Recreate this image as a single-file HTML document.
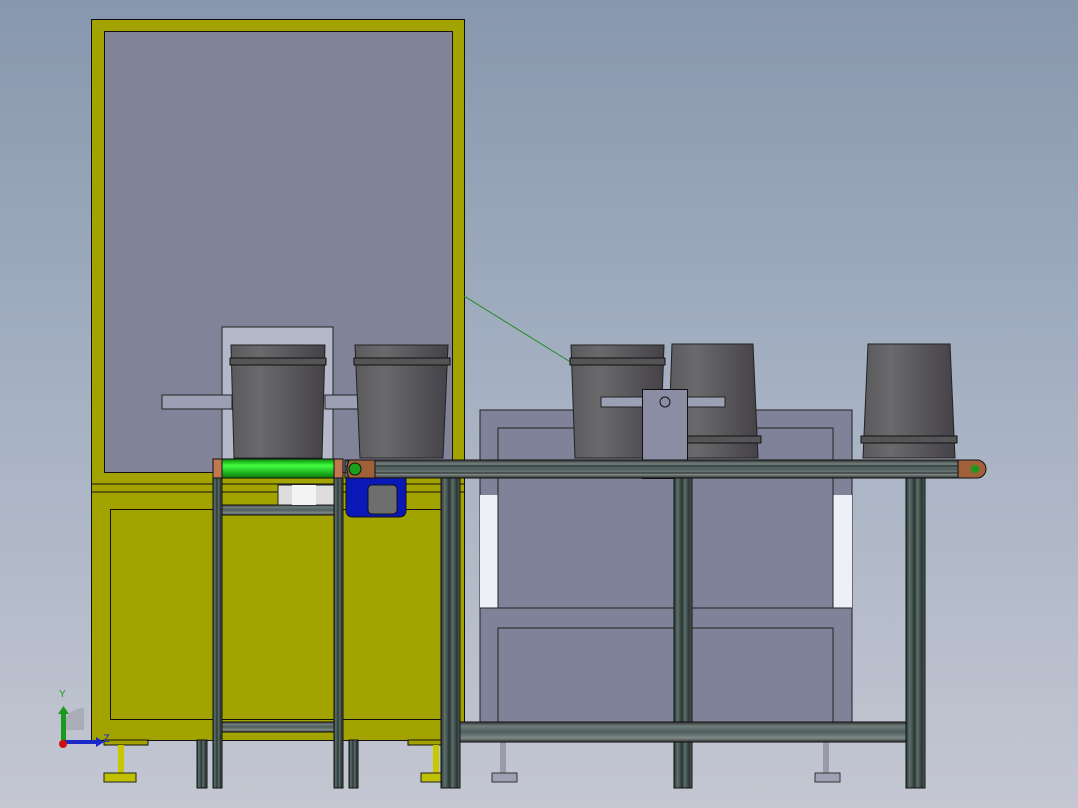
<!DOCTYPE html>
<html><head><meta charset="utf-8"><style>
html,body{margin:0;padding:0;width:1078px;height:808px;overflow:hidden}
body{background:linear-gradient(180deg,#8797ad 0%,#a3afc1 45%,#c4c7d2 100%)}
svg{position:absolute;left:0;top:0}
</style></head><body>
<svg width="1078" height="808" viewBox="0 0 1078 808" xmlns="http://www.w3.org/2000/svg" font-family="Liberation Sans, sans-serif">
<defs>
<linearGradient id="bk" x1="0" x2="1"><stop offset="0" stop-color="#5a5a5e"/><stop offset="0.3" stop-color="#6a6a6c"/><stop offset="1" stop-color="#454248"/></linearGradient>
<linearGradient id="gr" x1="0" y1="0" x2="0" y2="1"><stop offset="0" stop-color="#0a8a0a"/><stop offset="0.35" stop-color="#40ff40"/><stop offset="1" stop-color="#0a7a0a"/></linearGradient>
<linearGradient id="rail" x1="0" y1="0" x2="0" y2="1"><stop offset="0" stop-color="#333"/><stop offset="0.2" stop-color="#6f7d7b"/><stop offset="0.5" stop-color="#4f5e5c"/><stop offset="0.8" stop-color="#7f8b89"/><stop offset="1" stop-color="#333"/></linearGradient>
<linearGradient id="leg" x1="0" x2="1"><stop offset="0" stop-color="#2a3432"/><stop offset="0.2" stop-color="#5d706d"/><stop offset="0.45" stop-color="#2a3432"/><stop offset="0.6" stop-color="#5d706d"/><stop offset="0.85" stop-color="#2a3432"/><stop offset="1" stop-color="#5d706d"/></linearGradient>
</defs>
<rect x="480" y="410" width="372" height="312" fill="#7f8298" stroke="#222"/>
<rect x="480" y="495" width="18" height="113" fill="#eef0f8"/>
<rect x="833" y="495" width="19" height="113" fill="#eef0f8"/>
<rect x="498" y="428" width="335" height="180" fill="#7f8298" stroke="#222"/>
<line x1="480" y1="608" x2="852" y2="608" stroke="#222"/>
<rect x="498" y="628" width="335" height="94" fill="#7f8298" stroke="#222"/>
<rect x="500" y="740" width="6" height="33" fill="#9a9aac"/><rect x="492" y="773" width="25" height="9" fill="#a0a0b4" stroke="#333"/>
<rect x="823" y="740" width="6" height="33" fill="#9a9aac"/><rect x="815" y="773" width="25" height="9" fill="#a0a0b4" stroke="#333"/>
<rect x="91.5" y="19.5" width="373" height="721" fill="#a3a300" stroke="#111"/>
<rect x="104.5" y="31.5" width="348" height="441" fill="#818499" stroke="#111"/>
<line x1="91" y1="484" x2="465" y2="484" stroke="#111"/><line x1="91" y1="492" x2="465" y2="492" stroke="#111"/>
<rect x="110.5" y="509.5" width="337" height="210" fill="none" stroke="#111"/>
<rect x="104" y="740" width="44" height="5" fill="#a3a300" stroke="#111"/>
<rect x="408" y="740" width="44" height="5" fill="#a3a300" stroke="#111"/>
<rect x="118" y="745" width="6" height="28" fill="#c8c800"/><rect x="104" y="773" width="32" height="9" fill="#c0c000" stroke="#222"/>
<rect x="433" y="745" width="6" height="28" fill="#c8c800"/><rect x="421" y="773" width="20" height="9" fill="#c0c000" stroke="#222"/>
<line x1="464" y1="296" x2="572" y2="363" stroke="#1a8a1a"/>
<rect x="222" y="327" width="111" height="133" fill="#b4b8c8" stroke="#222"/>
<rect x="162" y="395" width="70" height="14" fill="#9ca0b4" stroke="#222"/>
<rect x="325" y="395" width="34" height="14" fill="#9ca0b4" stroke="#222"/>
<polygon points="231,345 325,345 322,458 234,458" fill="url(#bk)" stroke="#222"/>
<rect x="230" y="358" width="96" height="7" fill="#555" stroke="#111"/>
<polygon points="355,345 448,345 443,458 360,458" fill="url(#bk)" stroke="#222"/>
<rect x="354" y="358" width="96" height="7" fill="#555" stroke="#111"/>
<polygon points="571,345 664,345 660,458 575,458" fill="url(#bk)" stroke="#222"/>
<rect x="570" y="358" width="95" height="7" fill="#555" stroke="#111"/>
<polygon points="672,344 753,344 758,458 668,458" fill="url(#bk)" stroke="#222"/>
<rect x="670" y="436" width="91" height="7" fill="#555" stroke="#111"/>
<polygon points="868,344 950,344 955,458 863,458" fill="url(#bk)" stroke="#222"/>
<rect x="861" y="436" width="96" height="7" fill="#555" stroke="#111"/>
<rect x="601" y="397" width="124" height="10" fill="#9ca0b4" stroke="#222"/>
<rect x="642.5" y="389.5" width="45" height="89" fill="#8a8da3" stroke="#111"/>
<circle cx="665" cy="402" r="5" fill="none" stroke="#111"/>
<rect x="345" y="460" width="615" height="18" fill="url(#rail)" stroke="#111"/>
<line x1="345" y1="466" x2="960" y2="466" stroke="#222"/><line x1="345" y1="473" x2="960" y2="473" stroke="#222"/>
<path d="M958,460 H977 A9,9 0 0 1 977,478 H958 Z" fill="#a0603a" stroke="#111"/>
<circle cx="975" cy="469" r="4" fill="#1a9a1a"/>
<rect x="441" y="478" width="19" height="310" fill="url(#leg)" stroke="#111"/>
<rect x="674" y="478" width="18" height="310" fill="url(#leg)" stroke="#111"/>
<rect x="906" y="478" width="19" height="310" fill="url(#leg)" stroke="#111"/>
<rect x="460" y="722" width="446" height="20" fill="url(#rail)" stroke="#111"/>
<rect x="213" y="470" width="9" height="318" fill="url(#leg)" stroke="#111"/>
<rect x="334" y="470" width="9" height="318" fill="url(#leg)" stroke="#111"/>
<rect x="197" y="740" width="10" height="48" fill="url(#leg)" stroke="#111"/>
<rect x="349" y="740" width="9" height="48" fill="url(#leg)" stroke="#111"/>
<rect x="222" y="505" width="112" height="10" fill="url(#rail)" stroke="#111"/>
<rect x="222" y="722" width="112" height="10" fill="url(#rail)" stroke="#111"/>
<rect x="213" y="459" width="9" height="19" fill="#c07850" stroke="#111"/>
<rect x="334" y="459" width="9" height="19" fill="#c07850" stroke="#111"/>
<rect x="222" y="459" width="112" height="19" fill="url(#gr)" stroke="#111"/>
<rect x="278" y="485" width="56" height="20" fill="#ddd" stroke="#222"/><rect x="292" y="485" width="24" height="20" fill="#f4f4f4"/>
<path d="M346,478 H406 V510 Q406,517 399,517 H353 Q346,517 346,510 Z" fill="#0a18b8" stroke="#111"/>
<rect x="368" y="485" width="29" height="29" rx="4" fill="#6e6e6e" stroke="#111"/>
<path d="M349,460 H375 V478 H349 Q345,469 349,460 Z" fill="#a0603a" stroke="#111"/>
<circle cx="355" cy="469" r="6" fill="#1aa01a" stroke="#111"/>
<path d="M62,730 A22,22 0 0 1 84,708 V730 Z" fill="#9a9ea8" opacity="0.6"/>
<rect x="61" y="712" width="5" height="30" fill="#1a9a1a"/><polygon points="58,714 63.5,706 69,714" fill="#1a9a1a"/>
<rect x="62" y="740" width="34" height="4" fill="#1a2ac8"/><polygon points="96,737 104,742 96,747" fill="#1a2ac8"/>
<circle cx="63" cy="744" r="4" fill="#d01010"/>
<text x="59" y="697" font-size="10" fill="#1a9a1a">Y</text>
<text x="103" y="742" font-size="11" fill="#1a2ac8">Z</text>
</svg>
</body></html>
